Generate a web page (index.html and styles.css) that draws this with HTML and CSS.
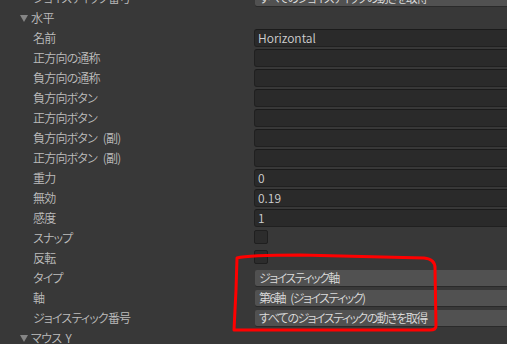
FILE: index.html
```html
<!DOCTYPE html>
<html lang="ja">
	<head>
		<meta charset="UTF-8">
		<meta content="width=device-width, initial-scale=1.0" name="viewport">
		<link rel="stylesheet" href="styles.css">
		<title>Input Manager</title>
	</head>
	<body>
		<div class="inspector">
			<div class="row">
				<span class="label">ジョイスティック番号</span>
				<div class="popup">すべてのジョイスティックの動きを取得</div>
			</div>

			<div class="foldout"><span class="arrow"></span>水平</div>

			<div class="row">
				<span class="label">名前</span>
				<div class="field">Horizontal</div>
			</div>
			<div class="row">
				<span class="label">正方向の通称</span>
				<div class="field"></div>
			</div>
			<div class="row">
				<span class="label">負方向の通称</span>
				<div class="field"></div>
			</div>
			<div class="row">
				<span class="label">負方向ボタン</span>
				<div class="field"></div>
			</div>
			<div class="row">
				<span class="label">正方向ボタン</span>
				<div class="field"></div>
			</div>
			<div class="row">
				<span class="label">負方向ボタン (副)</span>
				<div class="field"></div>
			</div>
			<div class="row">
				<span class="label">正方向ボタン (副)</span>
				<div class="field"></div>
			</div>
			<div class="row">
				<span class="label">重力</span>
				<div class="field">0</div>
			</div>
			<div class="row">
				<span class="label">無効</span>
				<div class="field">0.19</div>
			</div>
			<div class="row">
				<span class="label">感度</span>
				<div class="field">1</div>
			</div>
			<div class="row">
				<span class="label">スナップ</span>
				<div class="checkbox"></div>
			</div>
			<div class="row">
				<span class="label">反転</span>
				<div class="checkbox"></div>
			</div>
			<div class="row">
				<span class="label">タイプ</span>
				<div class="popup">ジョイスティック軸</div>
			</div>
			<div class="row">
				<span class="label">軸</span>
				<div class="popup">第6軸 (ジョイスティック)</div>
			</div>
			<div class="row">
				<span class="label">ジョイスティック番号</span>
				<div class="popup">すべてのジョイスティックの動きを取得</div>
			</div>

			<div class="foldout"><span class="arrow"></span>マウス Y</div>
		</div>

		<!-- hand-drawn highlight around the joystick settings -->
		<svg class="markup" width="507" height="344" viewBox="0 0 507 344">
			<path d="M237 258 C244 256 262 255 300 255 L424 258 Q435 259 435 268 L436 326 Q436 330 430 330 L240 330 L234 330 L236 290 Z"/>
		</svg>
	</body>
</html>
```

FILE: styles.css
```css
body {
    margin: 0;
    height: 344px;
    overflow: hidden;
    background-color: #383838;
    font-family: 'Noto Sans CJK JP', sans-serif;
    font-size: 12px;
    font-weight: 350;
    font-feature-settings: "palt";
    color: #bdbdbd;
    position: relative;
}

.inspector {
    width: 530px;
    margin-top: -12px;
}

.row {
    display: grid;
    grid-template-columns: 254px 1fr;
    height: 20px;
    line-height: 20px;
}

.label {
    padding-left: 33px;
    letter-spacing: -0.8px;
    word-spacing: 4px;
    white-space: nowrap;
}

.foldout {
    display: flex;
    align-items: center;
    height: 20px;
    line-height: 20px;
    padding-left: 20px;
    letter-spacing: -0.6px;
    word-spacing: 2px;
    white-space: pre;
}

.arrow {
    width: 0;
    height: 0;
    border-left: 4px solid transparent;
    border-right: 4px solid transparent;
    border-top: 7px solid #858585;
    margin-right: 3px;
    margin-top: 1px;
}

.field {
    box-sizing: border-box;
    height: 18px;
    margin-top: 1px;
    padding-left: 3px;
    line-height: 16px;
    background-color: #2a2a2a;
    border: 1px solid #202020;
    border-top-color: #1b1b1b;
    border-radius: 3px;
    color: #d0d0d0;
}

.checkbox {
    box-sizing: border-box;
    width: 14px;
    height: 14px;
    margin-top: 2px;
    background-color: #2c2c2c;
    border: 1px solid #1f1f1f;
    border-radius: 2px;
}

.popup {
    height: 16px;
    margin-top: 2px;
    margin-left: 1px;
    padding-left: 4px;
    line-height: 16px;
    letter-spacing: -1.5px;
    word-spacing: 4px;
    background-color: #515151;
    border-radius: 2px;
    box-shadow: 0 1px 0 #2a2a2a;
    color: #dcdcdc;
    white-space: nowrap;
}

.markup {
    position: absolute;
    left: 0;
    top: 0;
    pointer-events: none;
}

.markup path {
    fill: none;
    stroke: #f00;
    stroke-width: 3;
    stroke-linejoin: round;
}
```
